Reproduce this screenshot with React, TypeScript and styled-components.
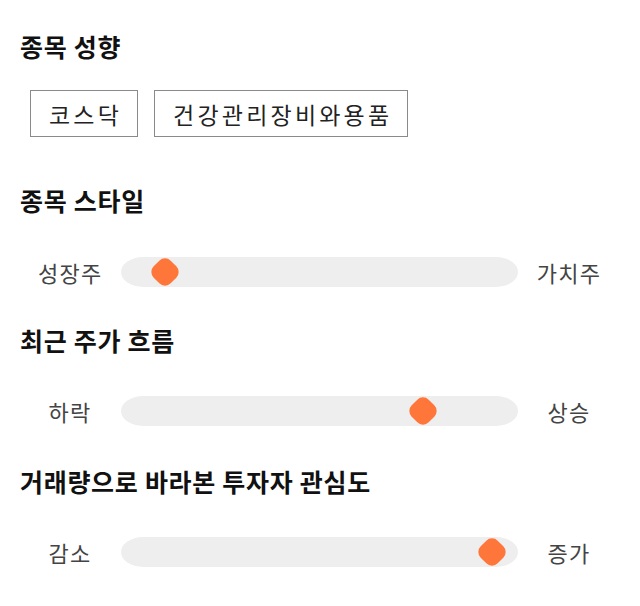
import React from "react";
import styled, { createGlobalStyle } from "styled-components";

const Global = createGlobalStyle`
  html, body { margin: 0; padding: 0; background: #fff; }
  body { font-family: "Noto Sans CJK KR", "Noto Sans", sans-serif; color: #111; }
`;

const Page = styled.div`
  padding: 30px 20px 0 20px;
`;

const Heading = styled.h2<{ $top: number }>`
  margin: ${(p) => p.$top}px 0 0 0;
  font-size: 25px;
  line-height: 32px;
  font-weight: 700;
  color: #111;
  letter-spacing: 0.7px;
`;

const ChipRow = styled.div`
  display: flex;
  gap: 16px;
  margin: 28px 0 0 10px;
`;

const Chip = styled.div`
  box-sizing: border-box;
  height: 47px;
  padding: 0 15px 0 18px;
  display: flex;
  align-items: center;
  border: 1px solid #8a8a8a;
  font-size: 23px;
  letter-spacing: 3.2px;
  color: #222;
`;

const SliderRow = styled.div<{ $top: number }>`
  display: grid;
  grid-template-columns: 64px 398px 66px;
  column-gap: 18px;
  align-items: center;
  width: 565px;
  margin: ${(p) => p.$top}px 0 0 18px;
  height: 30px;
`;

const SideLabel = styled.span`
  text-align: center;
  font-size: 22px;
  line-height: 30px;
  letter-spacing: 1.2px;
  color: #444;
  white-space: nowrap;
`;

const Track = styled.div`
  position: relative;
  height: 30px;
  background: #eeeeee;
  border-radius: 22px / 15px;
  margin-left: 1px;
`;

const Thumb = styled.div`
  position: absolute;
  top: 1px;
  width: 29px;
  height: 28px;
  display: flex;
  align-items: center;
  justify-content: center;
  &::before {
    content: "";
    flex: none;
    width: 24px;
    height: 24px;
    background: #ff763b;
    border-radius: 8px;
    transform: rotate(45deg);
  }
`;

type SliderProps = { left: string; right: string; value: number; top: number };

function Slider({ left, right, value, top }: SliderProps) {
  return (
    <SliderRow $top={top}>
      <SideLabel>{left}</SideLabel>
      <Track>
        <Thumb style={{ left: `calc(${value} * (100% - 29px))` }} />
      </Track>
      <SideLabel>{right}</SideLabel>
    </SliderRow>
  );
}

export default function App() {
  return (
    <>
      <Global />
      <Page>
        <Heading $top={0}>종목 성향</Heading>
        <ChipRow>
          <Chip>코스닥</Chip>
          <Chip>건강관리장비와용품</Chip>
        </ChipRow>
        <Heading $top={47}>종목 스타일</Heading>
        <Slider left="성장주" right="가치주" value={0.08} top={41} />
        <Heading $top={37}>최근 주가 흐름</Heading>
        <Slider left="하락" right="상승" value={0.782} top={40} />
        <Heading $top={39}>거래량으로 바라본 투자자 관심도</Heading>
        <Slider left="감소" right="증가" value={0.97} top={40} />
      </Page>
    </>
  );
}
